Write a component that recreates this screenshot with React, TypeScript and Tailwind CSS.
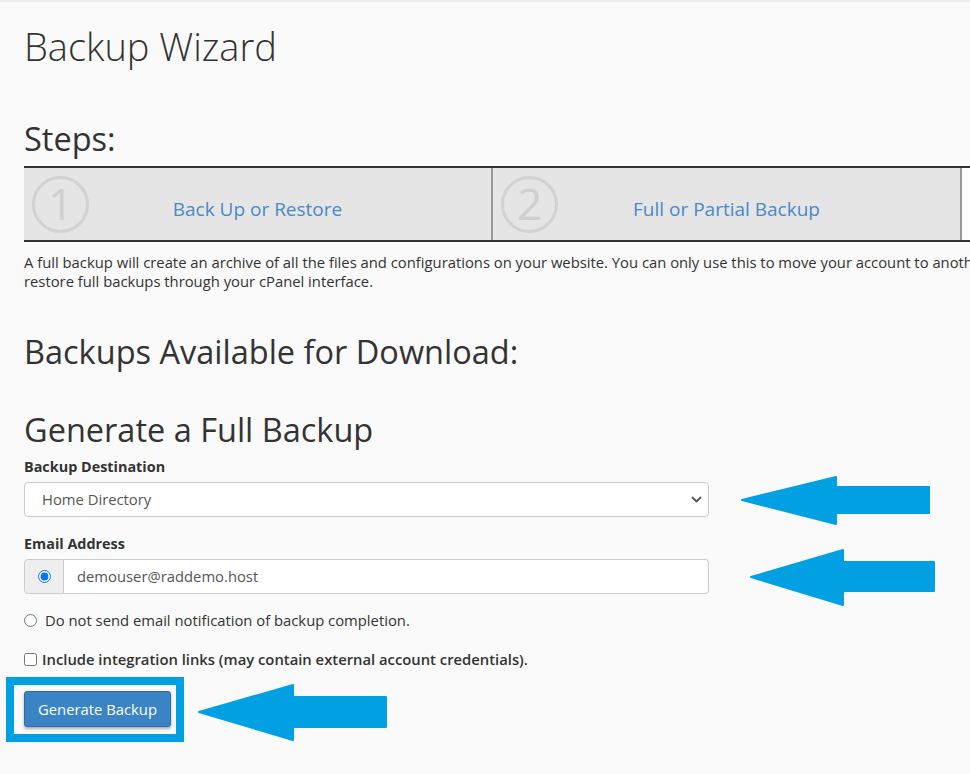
export default function App() {
  const steps = [
    { num: "1", label: "Back Up or Restore", active: false },
    { num: "2", label: "Full or Partial Backup", active: false },
    { num: "3", label: "Download", active: true },
  ]

  return (
    <div
      className="relative w-[970px] h-[774px] overflow-hidden bg-[#fafafa] text-[#333]"
      style={{ fontFamily: '"Open Sans", "Noto Sans", sans-serif' }}
    >
      <div className="h-[2px] bg-[#ececec]" />

      <div className="pl-[24px] w-[1440px]">
        <h1 className="mt-[22px] text-[38px] leading-[44px] font-light">Backup Wizard</h1>

        <h2 className="mt-[53px] text-[32.5px] leading-[36px]">Steps:</h2>

        {/* wizard steps */}
        <div className="mt-[9px] flex border-y-2 border-[#333]">
          {steps.map((step) => (
            <div
              key={step.num}
              className={
                step.active
                  ? "grid w-[469px] h-[72px] bg-white"
                  : "grid w-[469px] h-[72px] bg-[#e5e5e5] border-r-2 border-[#999]"
              }
            >
              <div className="col-start-1 row-start-1 self-center justify-self-start ml-[8px] w-[57px] h-[57px] rounded-full border-[3px] border-[#d2d2d2] flex items-center justify-center">
                <span className="text-[44px] leading-none text-[#cfcfcf] -mt-[2px]">{step.num}</span>
              </div>
              {!step.active && (
                <a className="col-start-1 row-start-1 place-self-center mt-[10px] text-[19px] leading-[24px] text-[#4a89c8]">
                  {step.label}
                </a>
              )}
            </div>
          ))}
        </div>

        <p className="mt-[11px] text-[14.8px] leading-[19px] whitespace-nowrap">
          A full backup will create an archive of all the files and configurations on your website. You can only use this to move your account to another server, or to keep a local copy of your files. You cannot
          <br />
          restore full backups through your cPanel interface.
        </p>

        <h2 className="mt-[43px] text-[32.5px] leading-[36px]">Backups Available for Download:</h2>

        <h2 className="mt-[42px] text-[32.5px] leading-[36px]">Generate a Full Backup</h2>

        <label className="block mt-[9px] text-[14.4px] leading-[20px] font-bold">Backup Destination</label>
        <div className="mt-[5px] w-[685px] h-[35px] flex items-center justify-between bg-white border border-[#ccc] rounded-[4px] pl-[17px] pr-[6px] text-[14.8px] text-[#555]">
          <span>Home Directory</span>
          <svg width="11" height="7" viewBox="0 0 11 7" fill="none">
            <path d="M1.5 1.5 L5.5 5.5 L9.5 1.5" stroke="#555" strokeWidth="1.8" strokeLinecap="round" strokeLinejoin="round" />
          </svg>
        </div>

        <label className="block mt-[17px] text-[14.4px] leading-[20px] font-bold">Email Address</label>
        <div className="mt-[5px] w-[685px] h-[35px] flex">
          <div className="w-[40px] flex items-center justify-center bg-[#eee] border border-[#ccc] rounded-l-[4px]">
            <input type="radio" checked readOnly className="w-[13px] h-[13px] accent-[#0075ff]" />
          </div>
          <div className="flex-1 flex items-center bg-white border border-l-0 border-[#ccc] rounded-r-[4px] pl-[13px] text-[14.8px] text-[#555]">
            demouser@raddemo.host
          </div>
        </div>

        <label className="mt-[16px] flex items-center gap-[8px] text-[14.8px] leading-[20px]">
          <input type="radio" readOnly checked={false} className="w-[13px] h-[13px]" />
          Do not send email notification of backup completion.
        </label>

        <label className="mt-[19px] flex items-center gap-[5px] text-[14.8px] leading-[20px] font-semibold">
          <input type="checkbox" readOnly checked={false} className="w-[13px] h-[13px]" />
          Include integration links (may contain external account credentials).
        </label>

        <button className="mt-[22px] h-[36px] w-[147px] rounded-[3px] bg-[#3a84c6] border border-[#2e6da4] text-white text-[14.8px] shadow-[0_2px_3px_rgba(0,0,0,0.3)]">
          Generate Backup
        </button>
      </div>

      {/* annotation: highlight box around the button */}
      <div className="absolute left-[6px] top-[677px] w-[178px] h-[65px] border-[8px] border-[#00a0e3]" />

      {/* annotation arrows */}
      <svg className="absolute inset-0 pointer-events-none" width="970" height="774">
        <g fill="#00a0e3" stroke="#00a0e3" strokeWidth="2" strokeLinejoin="round">
          <polygon points="742,500 836,477 836,487 929,487 929,513 836,513 836,524" />
          <polygon points="751,577 843,550 843,562 934,562 934,591 843,591 843,605" />
          <polygon points="199,712 293,685 293,697 386,697 386,727 293,727 293,740" />
        </g>
      </svg>
    </div>
  )
}
